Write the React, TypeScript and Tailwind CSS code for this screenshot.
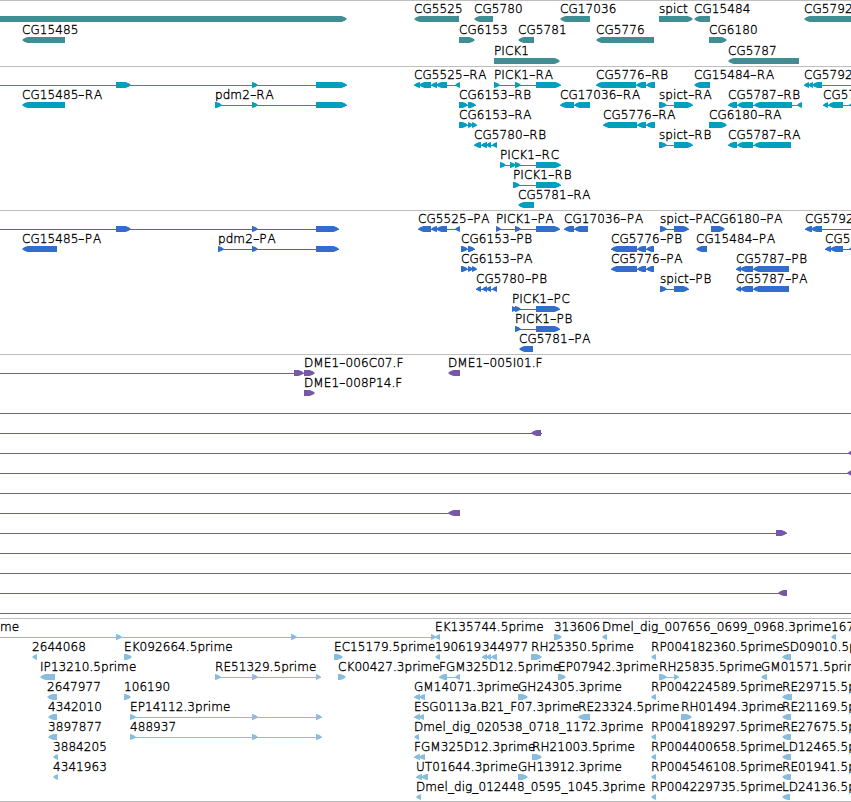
type Exon = [number, number];
type Dir = "L" | "R";

interface Feature {
  label?: string;
  x: number;
  dir: Dir;
  exons: Exon[];
  line?: [number, number];
}

interface TrackData {
  color: string;
  rowClass: string;
  padClass: string;
  rows: Feature[][];
}

const WIDTH = 851;
const HEAD = 5.5;

const f = (label: string, dir: Dir, ...exons: Exon[]): Feature => ({
  label,
  x: exons[0][0],
  dir,
  exons,
  line: exons.length > 1 ? [exons[0][0], exons[exons.length - 1][1]] : undefined,
});

const bare = (dir: Dir, line: [number, number] | undefined, ...exons: Exon[]): Feature => ({
  x: 0,
  dir,
  exons,
  line,
});

const fullLine = (): Feature => bare("R", [0, WIDTH]);

const genes: Feature[][] = [
  [
    bare("R", undefined, [-10, 347]),
    f("CG5525", "L", [414, 459]),
    f("CG5780", "L", [474, 493]),
    f("CG17036", "L", [560, 590]),
    f("spict", "R", [659, 693]),
    f("CG15484", "L", [694, 710]),
    f("CG5792", "L", [804, 870]),
  ],
  [
    f("CG15485", "L", [22, 65]),
    f("CG6153", "R", [459, 475]),
    f("CG5781", "L", [518, 534]),
    f("CG5776", "L", [596, 654]),
    f("CG6180", "R", [709, 727]),
  ],
  [f("PICK1", "R", [494, 560]), f("CG5787", "L", [728, 799])],
];

const transcripts: Feature[][] = [
  [
    bare("R", [0, 347], [116, 131], [252, 258], [316, 347]),
    f("CG5525-RA", "L", [414, 420], [419, 431], [431, 437], [436, 447], [455, 460]),
    f("PICK1-RA", "R", [494, 500], [515, 521], [536, 561]),
    f("CG5776-RB", "L", [596, 636], [636, 646], [646, 655]),
    f("CG15484-RA", "L", [694, 710]),
    f("CG5792-RA", "L", [804, 809], [808, 813], [812, 822], [870, 880]),
  ],
  [
    f("CG15485-RA", "L", [22, 65]),
    f("pdm2-RA", "R", [215, 222], [252, 258], [316, 347]),
    f("CG6153-RB", "R", [459, 468], [468, 476]),
    f("CG17036-RA", "L", [560, 574], [574, 590]),
    f("spict-RA", "R", [659, 667], [674, 693]),
    f("CG5787-RB", "L", [728, 737], [737, 753], [754, 792], [797, 802]),
    f("CG5792-RB", "L", [823, 828], [828, 843], [849, 870]),
  ],
  [
    f("CG6153-RA", "R", [459, 468], [468, 473], [472, 477]),
    f("CG5776-RA", "L", [603, 637], [637, 646], [646, 655]),
    f("CG6180-RA", "R", [709, 727]),
  ],
  [
    f("CG5780-RB", "L", [474, 481], [481, 487], [486, 491], [492, 497]),
    f("spict-RB", "R", [659, 667], [674, 693]),
    f("CG5787-RA", "L", [728, 737], [737, 753], [754, 791]),
  ],
  [f("PICK1-RC", "R", [500, 506], [510, 516], [515, 521], [536, 561])],
  [f("PICK1-RB", "R", [513, 520], [536, 561])],
  [f("CG5781-RA", "L", [518, 534])],
];

const proteins: Feature[][] = [
  [
    bare("R", [0, 339], [116, 131], [252, 258], [316, 339]),
    f("CG5525-PA", "L", [418, 431], [431, 437], [436, 447], [455, 460]),
    f("PICK1-PA", "R", [496, 501], [515, 521], [536, 560]),
    f("CG17036-PA", "L", [564, 574], [574, 588]),
    f("spict-PA", "R", [660, 667], [674, 689]),
    f("CG6180-PA", "R", [711, 725]),
    f("CG5792-PA", "L", [805, 812], [811, 822], [870, 880]),
  ],
  [
    f("CG15485-PA", "L", [22, 57]),
    f("pdm2-PA", "R", [218, 224], [252, 258], [316, 339]),
    f("CG6153-PB", "R", [461, 468], [468, 475]),
    f("CG5776-PB", "L", [611, 637], [637, 646], [646, 654]),
    f("CG15484-PA", "L", [696, 707]),
    f("CG5792-PB", "L", [825, 831], [830, 843], [849, 870]),
  ],
  [
    f("CG6153-PA", "R", [461, 468], [468, 473], [472, 477]),
    f("CG5776-PA", "L", [611, 637], [637, 646], [646, 654]),
    f("CG5787-PB", "L", [736, 741], [740, 753], [753, 789]),
  ],
  [
    f("CG5780-PB", "L", [476, 481], [482, 487], [486, 491], [492, 497]),
    f("spict-PB", "R", [660, 667], [674, 689]),
    f("CG5787-PA", "L", [736, 741], [740, 753], [753, 789]),
  ],
  [f("PICK1-PC", "R", [512, 517], [515, 521], [536, 560])],
  [f("PICK1-PB", "R", [515, 521], [536, 560])],
  [f("CG5781-PA", "L", [519, 533])],
];

const clones: Feature[][] = [
  [
    bare("R", [0, 304], [294, 304]),
    f("DME1-006C07.F", "R", [304, 315]),
    f("DME1-005I01.F", "L", [448, 460]),
  ],
  [f("DME1-008P14.F", "R", [304, 315])],
  [fullLine()],
  [bare("L", [0, 542], [531, 541])],
  [bare("L", [0, WIDTH], [848, 870])],
  [bare("L", [0, WIDTH], [847, 870])],
  [fullLine()],
  [bare("L", [0, 460], [448, 460])],
  [bare("R", [0, 787], [776, 787])],
  [fullLine()],
  [fullLine()],
  [bare("L", [0, 787], [778, 787])],
  [fullLine()],
];

const ests: Feature[][] = [
  [
    { label: "me", x: 0, dir: "R", line: [0, 436], exons: [[116, 122], [291, 297], [431, 436]] },
    f("EK135744.5prime", "L", [435, 440]),
    f("313606", "R", [554, 562]),
    f("Dmel_dig_007656_0699_0968.3prime", "L", [602, 607]),
    f("1671", "L", [831, 836]),
  ],
  [
    f("2644068", "L", [32, 37]),
    f("EK092664.5prime", "R", [124, 132]),
    f("EC15179.5prime", "R", [334, 343]),
    f("190619", "L", [435, 440]),
    f("344977", "L", [482, 487], [486, 491], [491, 497]),
    f("RH25350.5prime", "R", [531, 542]),
    f("RP004182360.5prime", "L", [651, 656]),
    f("SD09010.5prime", "L", [782, 791]),
  ],
  [
    f("IP13210.5prime", "L", [40, 55]),
    f("RE51329.5prime", "R", [215, 221], [252, 258], [316, 321]),
    f("CK00427.3prime", "R", [338, 346]),
    f("FGM325D12.5prime", "L", [439, 447], [455, 460]),
    f("EP07942.3prime", "R", [558, 566]),
    f("RH25835.5prime", "R", [659, 667], [674, 679]),
    f("GM01571.5prime", "L", [761, 767]),
  ],
  [
    f("2647977", "L", [47, 57]),
    f("106190", "R", [124, 131]),
    f("GM14071.3prime", "L", [414, 420], [419, 425]),
    f("GH24305.3prime", "R", [518, 528]),
    f("RP004224589.5prime", "L", [651, 656]),
    f("RE29715.5prime", "L", [782, 792]),
  ],
  [
    f("4342010", "L", [48, 57]),
    f("EP14112.3prime", "R", [130, 136], [252, 258], [316, 322]),
    f("ESG0113a.B21_F07.3prime", "L", [414, 420], [419, 424]),
    f("RE23324.5prime", "L", [578, 590]),
    f("RH01494.3prime", "R", [681, 692]),
    f("RE21169.5prime", "L", [782, 791]),
  ],
  [
    f("3897877", "L", [48, 57]),
    f("488937", "R", [130, 136], [252, 258], [316, 322]),
    f("Dmel_dig_020538_0718_1172.3prime", "L", [414, 419]),
    f("RP004189297.5prime", "L", [651, 656]),
    f("RE27675.5prime", "L", [782, 791]),
  ],
  [
    f("3884205", "L", [53, 58]),
    f("FGM325D12.3prime", "L", [414, 420], [419, 425]),
    f("RH21003.5prime", "R", [532, 542]),
    f("RP004400658.5prime", "L", [651, 656]),
    f("LD12465.5prime", "L", [782, 791]),
  ],
  [
    f("4341963", "L", [53, 58]),
    f("UT01644.3prime", "L", [416, 422], [421, 428]),
    f("GH13912.3prime", "R", [518, 528]),
    f("RP004546108.5prime", "L", [651, 656]),
    f("RE01941.5prime", "L", [782, 791]),
  ],
  [
    f("Dmel_dig_012448_0595_1045.3prime", "L", [416, 421]),
    f("RP004229735.5prime", "L", [651, 656]),
    f("LD24136.5prime", "L", [782, 790]),
  ],
];

const tracks: TrackData[] = [
  { color: "#408e93", rowClass: "h-[21px]", padClass: "pt-px pb-px", rows: genes },
  { color: "#009ebf", rowClass: "h-5", padClass: "pt-px pb-0.5", rows: transcripts },
  { color: "#306dcc", rowClass: "h-5", padClass: "pt-px pb-0.5", rows: proteins },
  { color: "#7658a8", rowClass: "h-5", padClass: "pt-px pb-0.5", rows: clones },
  { color: "#89bddd", rowClass: "h-5", padClass: "pt-px pb-px", rows: ests },
];

function exonPoints([a, b]: Exon, dir: Dir): string {
  const head = Math.min(HEAD, b - a);
  const tip = dir === "L" ? a : b;
  const back = dir === "L" ? b : a;
  const sign = dir === "L" ? 1 : -1;
  const mid = tip + sign * head * 0.4;
  const neck = tip + sign * head;
  return `${tip},3 ${mid},1.3 ${neck},0 ${back},0 ${back},6 ${neck},6 ${mid},4.7`;
}

function Glyphs({ features, color }: { features: Feature[]; color: string }) {
  return (
    <svg className="block h-1.5 w-[851px]" viewBox="0 0 851 6" fill={color}>
      {features.map((feature, i) => (
        <g key={i}>
          {feature.line && (
            <rect x={feature.line[0]} y={3} width={feature.line[1] - feature.line[0]} height={1} />
          )}
          {feature.exons.map((exon, j) => (
            <polygon key={j} points={exonPoints(exon, feature.dir)} />
          ))}
        </g>
      ))}
    </svg>
  );
}

function Label({ text }: { text: string }) {
  const [name, suffix] = text.split("-");
  if (!suffix) return <>{text}</>;
  return (
    <>
      {name}
      <span className="inline-block w-[6.5px] scale-x-150 text-center">-</span>
      <span className={suffix.length === 2 ? "tracking-[0.8px]" : ""}>{suffix}</span>
    </>
  );
}

function Row({ features, color, rowClass }: { features: Feature[]; color: string; rowClass: string }) {
  return (
    <div className={`flex flex-col ${rowClass}`}>
      <div className="relative h-3.5 shrink-0">
        {features.map(
          (feature, i) =>
            feature.label && (
              <span key={i} className="absolute top-0 whitespace-nowrap" style={{ left: feature.x }}>
                <Label text={feature.label} />
              </span>
            ),
        )}
      </div>
      <Glyphs features={features} color={color} />
    </div>
  );
}

export default function App() {
  return (
    <main className="flex h-[802px] w-[851px] flex-col overflow-hidden border-b border-[#bebebe] bg-white font-['DejaVu_Sans',sans-serif] text-[12px] leading-[14px] font-extralight tracking-[0.07px] text-black [-webkit-text-stroke:0.35px_black] [font-kerning:none]">
      {tracks.map((track, i) => (
        <section key={i} className={`shrink-0 border-t border-[#bebebe] ${track.padClass}`}>
          {track.rows.map((row, j) => (
            <Row key={j} features={row} color={track.color} rowClass={track.rowClass} />
          ))}
        </section>
      ))}
    </main>
  );
}
